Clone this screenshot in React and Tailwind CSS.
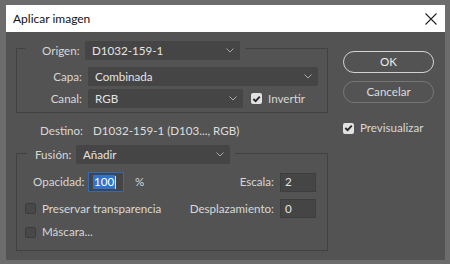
import React from 'react';

const Chevron = () => (
  <svg width="8" height="5" viewBox="0 0 8 5" className="shrink-0">
    <path d="M0.5 0.5 L4 4 L7.5 0.5" fill="none" stroke="#a9a9a9" strokeWidth="1" />
  </svg>
);

const Select = ({ value, className }) => (
  <div className={`h-[19px] rounded-[2px] bg-[#454545] flex items-center justify-between pl-[7px] pr-[6px] text-[#e4e4e4] ${className}`}>
    <span>{value}</span>
    <Chevron />
  </div>
);

const Check = ({ checked }) =>
  checked ? (
    <div className="w-[11px] h-[11px] shrink-0 rounded-[2px] bg-[#e2e2e2] flex items-center justify-center">
      <svg width="9" height="8" viewBox="0 0 9 8">
        <path d="M1.3 4 L3.6 6.2 L7.8 1.6" fill="none" stroke="#2b2b2b" strokeWidth="1.9" />
      </svg>
    </div>
  ) : (
    <div className="w-[11px] h-[11px] shrink-0 rounded-[2px] bg-[#484848] border border-[#3c3c3c]" />
  );

const Field = ({ value }) => (
  <div className="w-[36px] h-[19px] bg-[#454545] border border-[#3e3e3e] flex items-center pl-[4px] text-[#e4e4e4]">
    {value}
  </div>
);

export default function App() {
  return (
    <div
      className="w-[450px] h-[264px] bg-[#6c6c6c] pt-[5px] pl-[6px] text-[11.6px] leading-[14px] text-[#d8d8d8]"
      style={{ fontFamily: 'Lato, "Noto Sans", sans-serif' }}
    >
      <div className="w-[439px] h-[255px] bg-[#535353] flex flex-col">
        {/* Title bar */}
        <div className="h-[27px] shrink-0 bg-white flex items-center justify-between pl-[7px] pr-[8px] text-[12px] text-[#111]">
          <span>Aplicar imagen</span>
          <svg width="12" height="12" viewBox="0 0 12 12">
            <path d="M0.5 0.5 L11.5 11.5 M11.5 0.5 L0.5 11.5" stroke="#222" strokeWidth="1.1" />
          </svg>
        </div>

        <div className="flex pl-[10px]">
          {/* Left column */}
          <div className="w-[312px]">
            {/* Origen group */}
            <div className="mt-[16px] border border-[#414141] pb-[4px]">
              <div className="-mt-[8px] flex">
                <div className="ml-[8px] pl-[17px] pr-[5px] bg-[#535353] flex items-center">
                  <span className="w-[43px]">Origen:</span>
                  <Select value="D1032-159-1" className="w-[155px]" />
                </div>
              </div>
              <div className="mt-[7px] flex items-center">
                <span className="w-[65px] text-right">Capa:</span>
                <Select value="Combinada" className="ml-[6px] w-[230px]" />
              </div>
              <div className="mt-[3px] flex items-center">
                <span className="w-[65px] text-right">Canal:</span>
                <Select value="RGB" className="ml-[6px] w-[155px]" />
                <div className="ml-[8px] flex items-center gap-[6px]">
                  <Check checked />
                  <span>Invertir</span>
                </div>
              </div>
            </div>

            {/* Destino */}
            <div className="mt-[10px] h-[16px] flex items-center">
              <span className="w-[67px] text-right">Destino:</span>
              <span className="ml-[10px] text-[#dedede]">D1032-159-1 (D103..., RGB)</span>
            </div>

            {/* Fusión group */}
            <div className="mt-[14px] border border-[#414141] pb-[11px]">
              <div className="-mt-[9px] flex">
                <div className="ml-[10px] pl-[8px] pr-[5px] bg-[#535353] flex items-center">
                  <span className="w-[41px]">Fusión:</span>
                  <Select value="Añadir" className="w-[154px]" />
                </div>
              </div>

              <div className="mt-[8px] flex items-center justify-between pr-[11px]">
                <div className="flex items-center pl-[16px]">
                  <span className="w-[55px]">Opacidad:</span>
                  <div className="w-[36px] h-[20px] bg-[#454545] border border-[#2f6bb7] flex items-center pl-[4px]">
                    <span className="bg-[#2f74d0] text-white px-[1px]">100</span>
                    <span className="w-[1px] h-[13px] bg-[#e0e0e0]" />
                  </div>
                  <span className="ml-[11px]">%</span>
                </div>
                <div className="flex items-center">
                  <span>Escala:</span>
                  <div className="ml-[6px]">
                    <Field value="2" />
                  </div>
                </div>
              </div>

              <div className="mt-[7px] flex items-center justify-between pr-[11px]">
                <div className="flex items-center pl-[8px] gap-[6px]">
                  <Check />
                  <span>Preservar transparencia</span>
                </div>
                <div className="flex items-center">
                  <span>Desplazamiento:</span>
                  <div className="ml-[6px]">
                    <Field value="0" />
                  </div>
                </div>
              </div>

              <div className="mt-[7px] flex items-center pl-[8px] gap-[6px]">
                <Check />
                <span>Máscara...</span>
              </div>
            </div>
          </div>

          {/* Right column */}
          <div className="ml-[15px] w-[91px] mt-[19px] flex flex-col">
            <button className="h-[22px] rounded-full border-[1.5px] border-[#d2d2d2] text-[#ececec]">OK</button>
            <button className="mt-[8px] h-[22px] rounded-full border border-[#767676] text-[#dcdcdc]">Cancelar</button>
            <div className="mt-[18px] flex items-center gap-[6px]">
              <Check checked />
              <span>Previsualizar</span>
            </div>
          </div>
        </div>
      </div>
    </div>
  );
}
